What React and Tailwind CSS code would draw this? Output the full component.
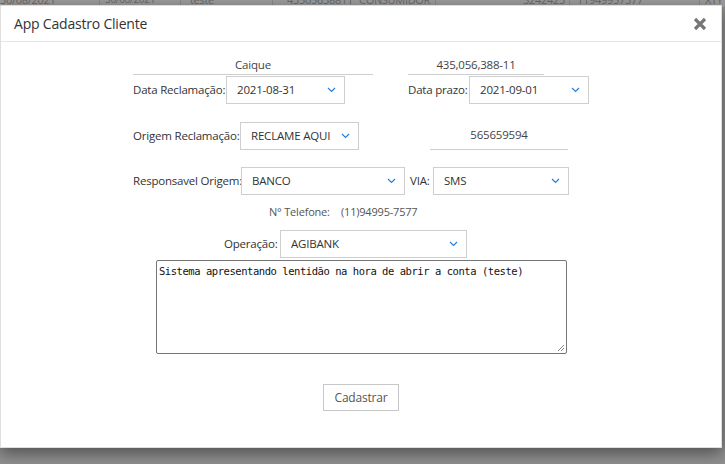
import React from "react";

const font = { fontFamily: '"Open Sans", "Noto Sans", sans-serif' };

function Chevron() {
  return (
    <svg width="9" height="6" viewBox="0 0 9 6" className="shrink-0">
      <path d="M1 1 L4.5 4.5 L8 1" fill="none" stroke="#2a7fd4" strokeWidth="1.2" />
    </svg>
  );
}

function Select({ value, w }) {
  return (
    <div
      className={`shrink-0 flex items-center justify-between h-[28px] border border-[#cfcfcf] bg-white pl-[10px] pr-[8px] text-[11.5px] tracking-[-0.2px] text-[#333] whitespace-nowrap ${w}`}
    >
      <span>{value}</span>
      <Chevron />
    </div>
  );
}

function Under({ value, w, extra = "" }) {
  return (
    <div className={`shrink-0 flex items-center justify-center border-b border-[#cfcfcf] text-[11.5px] tracking-[-0.2px] text-[#444] ${w} ${extra}`}>
      {value}
    </div>
  );
}

export default function App() {
  return (
    <div className="relative w-[725px] h-[464px] overflow-hidden bg-[#8f8f8f]" style={font}>
      {/* background page strip */}
      <div className="absolute left-0 top-[-8px] w-full h-[15px] flex text-[11px] tracking-[-0.3px] text-[#6a6a6a] bg-[#9c9c9c] whitespace-nowrap">
        <div className="w-[100px] shrink-0 border-r border-[#8a8a8a]">30/08/2021</div>
        <div className="w-[81px] shrink-0 border-r border-[#8a8a8a] pl-[5px] text-[10px]">30/08/2021</div>
        <div className="w-[92px] shrink-0 border-r border-[#8a8a8a] pl-[9px]">teste</div>
        <div className="w-[78px] shrink-0 border-r border-[#8a8a8a] pl-[14px]">43505638811</div>
        <div className="w-[85px] shrink-0 border-r border-[#8a8a8a] pl-[8px]">CONSUMIDOR</div>
        <div className="w-[134px] shrink-0 border-r border-[#8a8a8a] text-right pr-[4px]">5242425</div>
        <div className="w-[130px] shrink-0 border-r border-[#8a8a8a] pl-[7px]">11949957577</div>
        <div className="pl-[5px]">XTY</div>
      </div>

      {/* modal */}
      <div className="absolute left-0 top-[5px] w-[722px] h-[443px] bg-white border border-[#dedede] shadow-[0_5px_15px_rgba(0,0,0,0.45)] flex flex-col">
        <div className="h-[36px] shrink-0 border-b border-[#e5e5e5] flex items-center justify-between pl-[13px] pr-[14px]">
          <span className="text-[14px] tracking-[-0.2px] text-[#333]">App Cadastro Cliente</span>
          <svg width="14" height="14" viewBox="0 0 14 14">
            <path d="M2 2 L12 12 M12 2 L2 12" stroke="#777" strokeWidth="3.2" strokeLinecap="butt" />
          </svg>
        </div>

        <div className="flex flex-col text-[11.5px] tracking-[-0.2px] text-[#333] whitespace-nowrap">
          {/* row 1 */}
          <div className="flex items-end pl-[132px] mt-[12px] h-[21px]">
            <Under value="Caique" w="w-[240px]" extra="h-[20px]" />
            <div className="w-[35px] shrink-0" />
            <Under value="435,056,388-11" w="w-[136px]" extra="h-[20px]" />
          </div>
          {/* row 2 */}
          <div className="flex items-center pl-[132px] mt-[1px]">
            <span className="w-[93px] shrink-0">Data Reclamação:</span>
            <Select value="2021-08-31" w="w-[119px]" />
            <span className="ml-[63px] w-[61px] shrink-0">Data prazo:</span>
            <Select value="2021-09-01" w="w-[120px]" />
          </div>
          {/* row 3 */}
          <div className="flex items-center pl-[132px] mt-[18px]">
            <span className="w-[107px] shrink-0">Origem Reclamação:</span>
            <Select value="RECLAME AQUI" w="w-[119px]" />
            <Under value="565659594" w="w-[138px]" extra="ml-[71px] h-[28px] pb-[1px]" />
          </div>
          {/* row 4 */}
          <div className="flex items-center pl-[132px] mt-[17px]">
            <span className="w-[108px] shrink-0">Responsavel Origem:</span>
            <Select value="BANCO" w="w-[164px]" />
            <span className="ml-[5px] w-[23px] shrink-0">VIA:</span>
            <Select value="SMS" w="w-[136px]" />
          </div>
          {/* row 5 */}
          <div className="flex items-center pl-[268px] mt-[8px] h-[18px] text-[#555] text-[11px]">
            <span className="w-[72px] shrink-0">N° Telefone:</span>
            <span>(11)94995-7577</span>
          </div>
          {/* row 6 */}
          <div className="flex items-center pl-[223px] mt-[9px]">
            <span className="w-[56px] shrink-0">Operação:</span>
            <Select value="AGIBANK" w="w-[187px]" />
          </div>
          {/* textarea */}
          <div className="pl-[155px] mt-[2px]">
            <div className="relative w-[411px] h-[94px] border border-[#767676] rounded-[2px] pl-[2px] pt-[3px] text-[10.5px] tracking-[-0.45px] text-[#111]" style={{ fontFamily: '"DejaVu Sans Mono", "Liberation Mono", monospace' }}>
              Sistema apresentando lentidão na hora de abrir a conta (teste)
              <svg className="absolute right-[1px] bottom-[1px]" width="8" height="8" viewBox="0 0 8 8">
                <path d="M7 1 L1 7 M7 4 L4 7" stroke="#888" strokeWidth="1" />
              </svg>
            </div>
          </div>
          {/* button */}
          <div className="pl-[322px] mt-[30px]">
            <div className="w-[76px] h-[27px] border border-[#c8c8c8] flex items-center justify-center text-[12px] text-[#555]">
              Cadastrar
            </div>
          </div>
        </div>
      </div>
    </div>
  );
}
